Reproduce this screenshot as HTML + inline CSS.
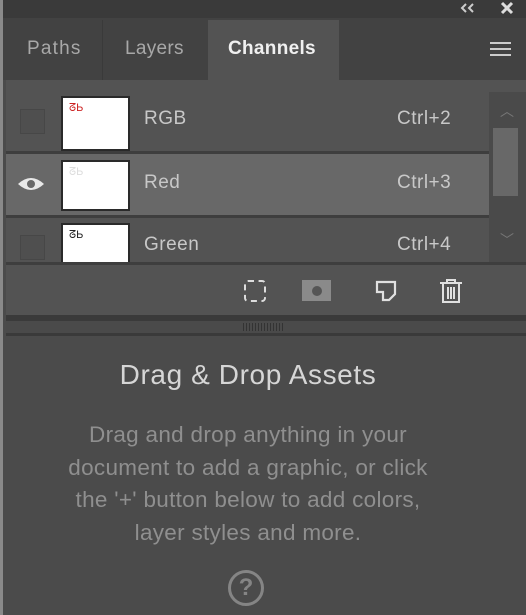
<!DOCTYPE html>
<html><head><style>
*{margin:0;padding:0;box-sizing:border-box}
body{width:526px;height:615px;background:#4b4b4b;position:relative;overflow:hidden;font-family:"Liberation Sans",sans-serif}
.a{position:absolute}
.t{color:#c8c8c8;font-size:19px;letter-spacing:0.5px}
.thumb{position:absolute;left:61px;width:69px;background:#fff;border:2px solid #2a2a2a}
.cb{position:absolute;left:20px;width:25px;height:25px;border:1px solid #474747;background:#4f4f4f}
</style></head><body>
<div class="a" style="left:0;top:0;width:3px;height:615px;background:#8a8a8a"></div>
<div class="a" style="left:3px;top:0;width:523px;height:18px;background:#3a3a3a"></div>
<svg class="a" style="left:460px;top:3px" width="16" height="10"><path d="M6 1L2 5L6 9M13 1L9 5L13 9" fill="none" stroke="#ccc" stroke-width="2"/></svg>
<svg class="a" style="left:500px;top:1px" width="14" height="14"><path d="M2 2L12 12M12 2L2 12" stroke="#ddd" stroke-width="3"/></svg>
<div class="a" style="left:3px;top:18px;width:523px;height:62px;background:#424242"></div>
<div class="a" style="left:102px;top:20px;width:1px;height:60px;background:#3a3a3a"></div>
<div class="a" style="left:208px;top:20px;width:131px;height:62px;background:#535353"></div>
<div class="a t" style="left:27px;top:38px;color:#a8a8a8;letter-spacing:1.2px">Paths</div>
<div class="a t" style="left:125px;top:38px;color:#a8a8a8;letter-spacing:0.3px">Layers</div>
<div class="a t" style="left:228px;top:38px;color:#f0f0f0;font-weight:bold;letter-spacing:0.3px">Channels</div>
<div class="a" style="left:490px;top:42px;width:21px;height:14px;border-top:2px solid #ccc;border-bottom:2px solid #ccc"></div>
<div class="a" style="left:490px;top:48px;width:21px;height:2px;background:#ccc"></div>
<div class="a" style="left:6px;top:80px;width:520px;height:237px;background:#535353"></div>
<div class="a" style="left:6px;top:151px;width:484px;height:3px;background:#3e3e3e"></div>
<div class="a" style="left:6px;top:154px;width:484px;height:61px;background:#686868"></div>
<div class="a" style="left:6px;top:215px;width:484px;height:3px;background:#3e3e3e"></div>
<div class="a" style="left:489px;top:92px;width:37px;height:170px;background:#4a4a4a"></div>
<div class="a" style="left:493px;top:128px;width:25px;height:68px;background:#686868"></div>
<div class="a" style="left:500px;top:101px;color:#777;font-size:14px">︿</div>
<div class="a" style="left:500px;top:230px;color:#777;font-size:14px">﹀</div>
<div class="cb" style="top:109px"></div>
<div class="thumb" style="top:96px;height:55px"><span style="color:#c22;font-size:11px;margin-left:6px">ᘔЬ</span></div>
<div class="a t" style="left:144px;top:108px">RGB</div>
<div class="a t" style="left:397px;top:108px">Ctrl+2</div>
<svg class="a" style="left:16px;top:174px" width="30" height="20"><path d="M2 10 Q15 -2 28 10 Q15 22 2 10Z" fill="#e8e8e8"/><circle cx="15" cy="10" r="4" fill="#686868"/></svg>
<div class="thumb" style="top:160px;height:51px"><span style="color:#ddd;font-size:11px;margin-left:6px">ᘔЬ</span></div>
<div class="a t" style="left:144px;top:172px">Red</div>
<div class="a t" style="left:397px;top:172px">Ctrl+3</div>
<div class="cb" style="top:235px"></div>
<div class="thumb" style="top:223px;height:42px;border-bottom:none"><span style="color:#222;font-size:11px;margin-left:6px">ᘔЬ</span></div>
<div class="a t" style="left:144px;top:234px">Green</div>
<div class="a t" style="left:397px;top:234px">Ctrl+4</div>
<div class="a" style="left:6px;top:262px;width:520px;height:3px;background:#3e3e3e"></div>
<div class="a" style="left:244px;top:280px;width:22px;height:22px;border:2px dashed #ddd;border-radius:4px"></div>
<div class="a" style="left:302px;top:280px;width:29px;height:21px;background:#8a8a8a"><div style="margin:6px auto;width:10px;height:10px;border-radius:50%;background:#555"></div></div>
<svg class="a" style="left:375px;top:280px" width="22" height="22"><path d="M2 2H20V14L14 20H8V12H2Z" fill="none" stroke="#e0e0e0" stroke-width="2.2"/></svg>
<svg class="a" style="left:438px;top:278px" width="26" height="26"><path d="M2 5H24M9 5V2H17V5M5 5V24H21V5M10 9V21M13 9V21M16 9V21" fill="none" stroke="#e0e0e0" stroke-width="2"/></svg>
<div class="a" style="left:6px;top:315px;width:520px;height:6px;background:#3a3a3a"></div>
<div class="a" style="left:6px;top:321px;width:520px;height:12px;background:#4a4a4a"></div>
<div class="a" style="left:243px;top:323px;width:42px;height:8px;background:repeating-linear-gradient(90deg,#333 0 1px,transparent 1px 3px)"></div>
<div class="a" style="left:6px;top:333px;width:520px;height:3px;background:#3a3a3a"></div>
<div class="a" style="left:0;top:359px;width:496px;text-align:center;color:#d6d6d6;font-size:28px;letter-spacing:0.6px">Drag &amp; Drop Assets</div>
<div class="a" style="left:0;top:419px;width:496px;text-align:center;color:#8f8f8f;font-size:22.5px;line-height:32.5px;letter-spacing:0.3px">Drag and drop anything in your<br>document to add a graphic, or click<br>the '+' button below to add colors,<br>layer styles and more.</div>
<div class="a" style="left:228px;top:570px;width:36px;height:36px;border:3px solid #858585;border-radius:50%;color:#858585;font-size:24px;font-weight:bold;text-align:center;line-height:30px">?</div>
</body></html>
